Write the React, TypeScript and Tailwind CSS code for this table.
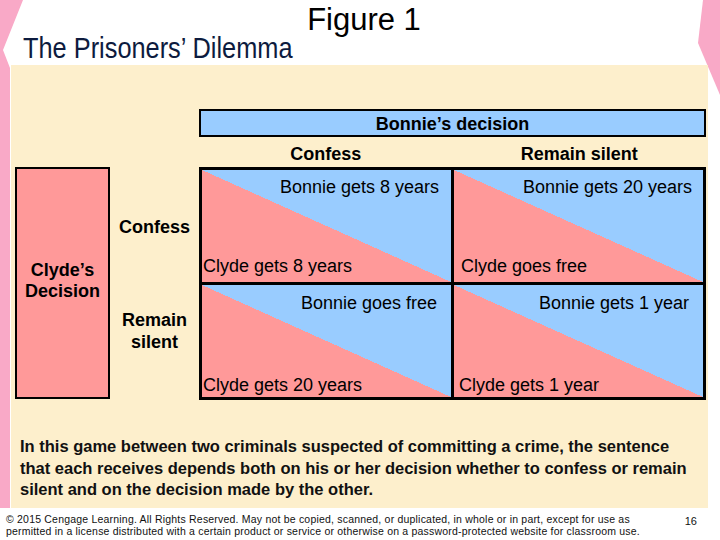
const SANS = "font-['Liberation_Sans',Arial,sans-serif]";

type Cell = {
  bonnie: string;
  clyde: string;
  pad: string;
};

const CELLS: Cell[] = [
  { bonnie: "Bonnie gets 8 years", clyde: "Clyde gets 8 years", pad: "pt-[7px] pb-[6px] pl-[1px] pr-[12px]" },
  { bonnie: "Bonnie gets 20 years", clyde: "Clyde goes free", pad: "pt-[7px] pb-[6px] pl-[7px] pr-[11px]" },
  { bonnie: "Bonnie goes free", clyde: "Clyde gets 20 years", pad: "pt-[8px] pb-[2px] pl-[1px] pr-[14px]" },
  { bonnie: "Bonnie gets 1 year", clyde: "Clyde gets 1 year", pad: "pt-[8px] pb-[2px] pl-[5px] pr-[14px]" },
];

function Decor() {
  return (
    <svg className="pointer-events-none absolute inset-0" width="720" height="540" aria-hidden>
      <polygon points="0,0 23,0 3,50 10,68 10,508 0,508" fill="#F9A9C7" />
      <polygon points="703,0 720,0 720,95 698,43" fill="#F9A9C7" />
    </svg>
  );
}

export default function App() {
  return (
    <div className={`relative h-[540px] w-[720px] overflow-hidden bg-white text-black ${SANS}`}>
      <Decor />

      <header className="relative h-[65px]">
        <div className="pl-[8px] pt-[4px] text-center text-[31px] leading-none">Figure 1</div>
        <div className="-mt-[2px] pl-[23px] text-[30px] leading-none text-[#0d1b3e]">
          {/* the slide title is set in a narrow face, which is not installed */}
          <span className="inline-block origin-left scale-x-[0.845]">The Prisoners’ Dilemma</span>
        </div>
      </header>

      <section className="relative ml-[11px] h-[443px] w-[697px] bg-[#fdefcc] pl-[4px] pt-[44px]">
        <div className="grid grid-cols-[95px_89px_507px]">
          {/* Bonnie's header */}
          <div className="col-start-3 flex h-[28px] items-center justify-center border-2 border-black bg-[#99ccff] pt-[1px] text-[18px] font-bold leading-[20px]">
            Bonnie’s decision
          </div>
          <div className="col-start-3 grid h-[30px] grid-cols-2 pt-[7px] text-center text-[18px] font-bold leading-[20px]">
            <span>Confess</span>
            <span>Remain silent</span>
          </div>

          {/* Clyde's side */}
          <div className="col-start-1 flex h-[232px] items-center justify-center border-2 border-black bg-[#ff9999] pb-[5px] text-center text-[18px] font-bold leading-[21px]">
            Clyde’s
            <br />
            Decision
          </div>
          <div className="flex flex-col items-center text-center text-[18px] font-bold">
            <span className="mt-[50px] leading-[20px]">Confess</span>
            <span className="mt-[72px] leading-[22px]">
              Remain
              <br />
              silent
            </span>
          </div>

          {/* payoff matrix */}
          <div className="grid h-[233px] grid-cols-2 grid-rows-2 gap-[3px] border-[3px] border-black bg-black text-[18px] leading-[20px]">
            {CELLS.map((c) => (
              <div
                key={c.bonnie}
                className={`flex flex-col justify-between bg-[linear-gradient(to_top_right,#ff9999_50%,#99ccff_50%)] ${c.pad}`}
              >
                <span className="text-right">{c.bonnie}</span>
                <span>{c.clyde}</span>
              </div>
            ))}
          </div>
        </div>

        <p className="mt-[36px] whitespace-nowrap pl-[5px] text-[16.5px] font-bold leading-[21.7px] text-[#111]">
          In this game between two criminals suspected of committing a crime, the sentence
          <br />
          that each receives depends both on his or her decision whether to confess or remain
          <br />
          silent and on the decision made by the other.
        </p>
      </section>

      <footer className="flex justify-between pl-[6px] pr-[23px] pt-[5px] text-[#111]">
        <p className="whitespace-nowrap text-[10.5px] leading-[12px] tracking-[0.2px]">
          © 2015 Cengage Learning. All Rights Reserved. May not be copied, scanned, or duplicated, in whole or in part, except for use as
          <br />
          permitted in a license distributed with a certain product or service or otherwise on a password-protected website for classroom use.
        </p>
        <span className="pt-[3px] text-[11px] leading-[11px]">16</span>
      </footer>
    </div>
  );
}
